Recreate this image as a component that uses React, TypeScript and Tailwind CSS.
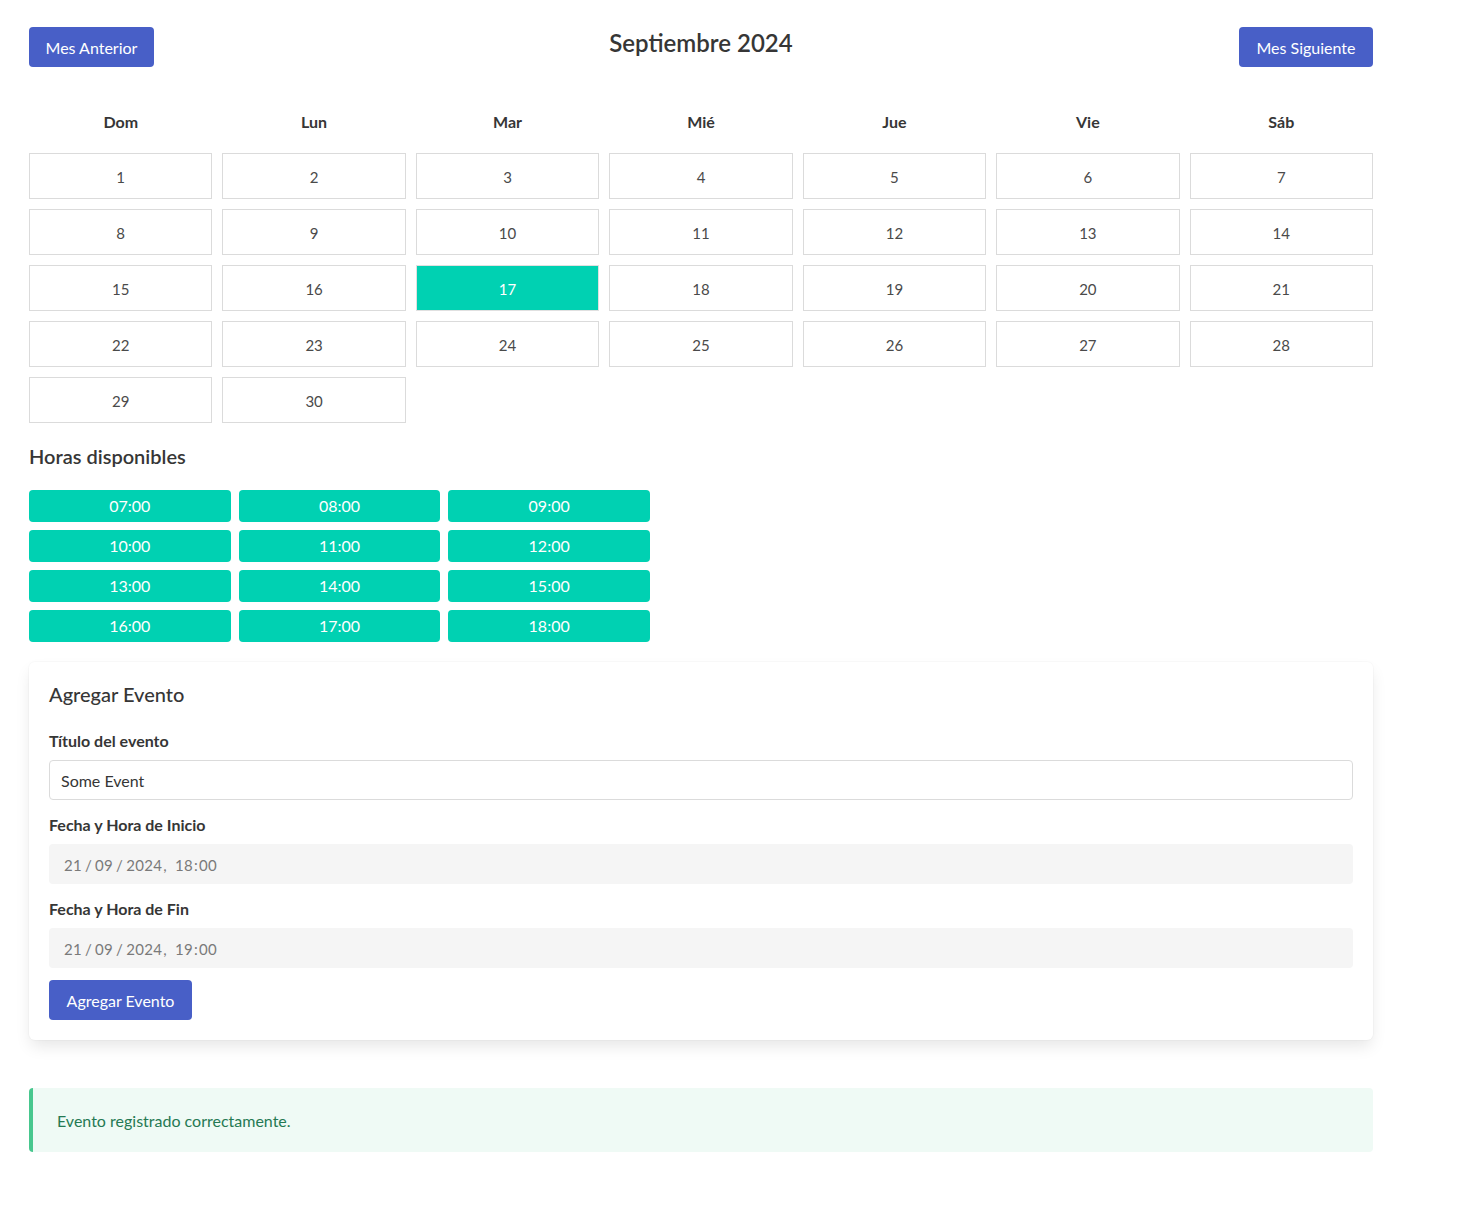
import React from "react";

const days = ["Dom", "Lun", "Mar", "Mié", "Jue", "Vie", "Sáb"];
const hours = ["07:00", "08:00", "09:00", "10:00", "11:00", "12:00", "13:00", "14:00", "15:00", "16:00", "17:00", "18:00"];

function DateText({ t }: { t: string }) {
  return (
    <div className="flex items-center pt-[3px] text-[15px] text-[#7a7a7a] tracking-[0.02em]">
      <span>21</span>
      <span className="mx-[3px]">/</span>
      <span>09</span>
      <span className="mx-[3px]">/</span>
      <span>2024</span>
      <span className="ml-[1px] mr-[8px]">,</span>
      <span>{t}</span>
      <span className="mx-[1px]">:</span>
      <span>00</span>
    </div>
  );
}

export default function App() {
  const cells = Array.from({ length: 30 }, (_, i) => i + 1);
  return (
    <div className="min-h-[1215px] bg-white" style={{ fontFamily: "Lato, 'Open Sans', sans-serif" }}>
      <div className="ml-[29px] w-[1344px] pt-[27px]">
        <div className="grid grid-cols-[1fr_auto_1fr] items-start">
          <button className="h-10 w-[125px] justify-self-start rounded-[4px] bg-[#485fc7] pt-px text-base text-white">Mes Anterior</button>
          <h2 className="text-[24px] font-semibold leading-[32px] text-[#363636]">Septiembre 2024</h2>
          <button className="h-10 w-[134px] justify-self-end rounded-[4px] bg-[#485fc7] pt-px text-base text-white">Mes Siguiente</button>
        </div>

        <div className="mt-[43px] mb-[19px] grid grid-cols-7 gap-[10px]">
          {days.map((d) => (
            <div key={d} className="flex h-6 items-center justify-center text-base font-bold text-[#363636]">{d}</div>
          ))}
        </div>

        <div className="grid grid-cols-7 gap-[10px]">
          {cells.map((n) => (
            <div
              key={n}
              className={
                n === 17
                  ? "flex h-[46px] items-center justify-center border border-[#e0e0e0] bg-[#00d1b2] pt-[2px] text-[15px] text-white"
                  : "flex h-[46px] items-center justify-center border border-[#dbdbdb] bg-white pt-[2px] text-[15px] text-[#4a4a4a]"
              }
            >
              {n}
            </div>
          ))}
        </div>

        <h3 className="mt-[19px] text-[20px] font-semibold leading-[28px] text-[#363636]">Horas disponibles</h3>

        <div className="mt-5 grid w-[621px] grid-cols-3 gap-2">
          {hours.map((h) => (
            <button key={h} className="h-8 rounded-[4px] bg-[#00d1b2] text-base text-white">{h}</button>
          ))}
        </div>

        <div className="mt-5 rounded-md bg-white p-5 shadow-[0_8px_16px_-2px_rgba(10,10,10,0.1),0_0_0_1px_rgba(10,10,10,0.02)]">
          <h3 className="text-[20px] font-medium leading-6 text-[#363636]">Agregar Evento</h3>
          <label className="mt-[23px] block text-base font-bold leading-6 text-[#363636]">Título del evento</label>
          <div className="mt-[7px] flex h-10 items-center rounded-[4px] border border-[#dbdbdb] px-[11px] pt-[2px] text-base text-[#363636]">Some Event</div>
          <label className="mt-[13px] block text-base font-bold leading-6 text-[#363636]">Fecha y Hora de Inicio</label>
          <div className="mt-[7px] flex h-10 items-center rounded-[4px] bg-[#f5f5f5] px-[15px]">
            <DateText t="18" />
          </div>
          <label className="mt-[13px] block text-base font-bold leading-6 text-[#363636]">Fecha y Hora de Fin</label>
          <div className="mt-[7px] flex h-10 items-center rounded-[4px] bg-[#f5f5f5] px-[15px]">
            <DateText t="19" />
          </div>
          <button className="mt-3 h-10 w-[143px] rounded-[4px] bg-[#485fc7] pt-px text-base text-white">Agregar Evento</button>
        </div>

        <div className="mt-12 flex h-16 items-center rounded-[4px] border-l-4 border-[#48c78e] bg-[#effaf5] pl-6 pt-[2px] text-base text-[#257953]">
          Evento registrado correctamente.
        </div>
      </div>
    </div>
  );
}
